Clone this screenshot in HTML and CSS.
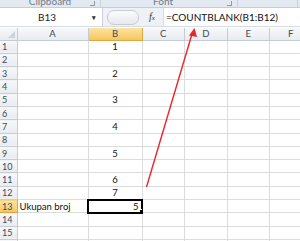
FILE: index.html
```html
<!DOCTYPE html>
<html lang="en">
<head>
    <meta charset="UTF-8">
    <title>COUNTBLANK</title>
    <link rel="stylesheet" href="styles.css">
</head>
<body>

    <div class="ribbon">
        <div class="group g-clip"><span>Clipboard</span><i class="launcher"></i></div>
        <div class="group g-font"><span>Font</span><i class="launcher"></i></div>
        <div class="group g-align"></div>
        <div class="group g-rest"></div>
    </div>

    <div class="fbar">
        <div class="namebox"><span>B13</span><b class="drop">&#9662;</b></div>
        <div class="grip"><span class="pill"></span></div>
        <div class="fx">f<sub>x</sub></div>
        <div class="formula">=COUNTBLANK(B1:B12)</div>
    </div>

    <div class="sheet">
        <table>
            <colgroup>
                <col class="c-row">
                <col class="c-a">
                <col class="c-b">
                <col class="c-std">
                <col class="c-std">
                <col class="c-std">
                <col class="c-std">
            </colgroup>
            <thead>
                <tr>
                    <th class="corner"></th>
                    <th>A</th>
                    <th class="sel">B</th>
                    <th>C</th>
                    <th>D</th>
                    <th>E</th>
                    <th>F</th>
                </tr>
            </thead>
            <tbody id="rows"></tbody>
        </table>

        <svg class="arrow" width="300" height="241" viewBox="0 0 300 241">
            <line x1="146.5" y1="187" x2="192" y2="34" stroke="#e8262b" stroke-width="1.4"/>
            <polygon points="194.5,28 189,35.5 197,37" fill="#e8262b"/>
        </svg>
    </div>

    <script>
        const cells = {
            1: ["", "1"], 3: ["", "2"], 5: ["", "3"], 7: ["", "4"],
            9: ["", "5"], 11: ["", "6"], 12: ["", "7"], 13: ["Ukupan broj", "5"]
        };

        // row 16 only peeks in at the bottom edge, so no label for it
        const body = document.getElementById("rows");
        for (let r = 1; r <= 16; r++) {
            const [a, b] = cells[r] || ["", ""];
            const row = document.createElement("tr");
            const active = r === 13;
            row.innerHTML = `
                <th class="${active ? "sel" : ""}">${r < 16 ? r : ""}</th>
                <td class="txt">${a}</td>
                <td class="${active ? "active" : "num"}">${b}</td>
                <td></td><td></td><td></td><td></td>
            `;
            body.appendChild(row);
        }
    </script>
</body>
</html>
```

FILE: styles.css
```css
body {
    margin: 0;
    width: 300px;
    height: 241px;
    overflow: hidden;
    background: #fff;
    font-family: Lato, "Open Sans", sans-serif;
    position: relative;
}

.ribbon {
    display: flex;
    height: 7px;
    background: #e3e9f0;
    border-bottom: 1px solid #c5cdd8;
    overflow: hidden;
}

.group {
    position: relative;
    border-right: 1px solid #c9d1dc;
    display: flex;
    justify-content: center;
}

.group span {
    font-size: 10px;
    line-height: 10px;
    margin-top: -4px;
    color: #6f7d8e;
}

.g-clip { width: 100px; }
.g-font { width: 137px; padding-right: 12px; box-sizing: border-box; }
.g-align { width: 59px; }
.g-rest { flex: 1; border-right: none; }

.launcher {
    position: absolute;
    right: 5px;
    top: 1px;
    width: 4px;
    height: 4px;
    border-right: 1px solid #8e9aa8;
    border-bottom: 1px solid #8e9aa8;
}

.fbar {
    display: flex;
    height: 18px;
    background: #eef1f5;
    border-bottom: 1px solid #d6dce4;
}

.namebox {
    width: 102px;
    background: #fff;
    border-right: 1px solid #c9d0da;
    display: flex;
    align-items: center;
    font-size: 10px;
    color: #222;
}

.namebox span {
    flex: 1;
    text-align: center;
    padding-left: 2px;
}

.drop {
    font-size: 7px;
    color: #333;
    width: 10px;
}

.grip {
    width: 42px;
    display: flex;
    align-items: center;
    padding-left: 4px;
}

.pill {
    width: 30px;
    height: 13px;
    border-radius: 7px;
    border: 1px solid #c6ccd4;
    background: linear-gradient(#fafbfc, #e6e9ee);
}

.fx {
    width: 14px;
    font-family: "Liberation Serif", serif;
    font-style: italic;
    font-size: 10px;
    line-height: 18px;
    color: #333;
}

.fx sub {
    font-size: 7px;
    vertical-align: 0;
}

.formula {
    flex: 1;
    background: #fff;
    border-left: 1px solid #d6dce4;
    font-size: 10px;
    line-height: 18px;
    padding-left: 2px;
    color: #111;
    white-space: nowrap;
}

.sheet {
    margin-top: 1px;
}

table {
    border-collapse: collapse;
    table-layout: fixed;
    width: 312px;
}

.c-row { width: 17px; }
.c-a { width: 71px; }
.c-b { width: 54px; }
.c-std { width: 42.5px; }

th, td {
    height: 12.3px;
    padding: 0;
    font-size: 9.5px;
    line-height: 11px;
    white-space: nowrap;
    overflow: hidden;
}

td {
    border-right: 1px solid #dadcdd;
    border-bottom: 1px solid #dadcdd;
    color: #111;
}

th {
    background: linear-gradient(#f7f8fa, #e8ebef);
    border-right: 1px solid #c6ccd4;
    border-bottom: 1px solid #c6ccd4;
    color: #3a4a5c;
    font-weight: normal;
}

thead th {
    height: 11.5px;
}

tbody th {
    text-align: left;
    padding-left: 2px;
    font-size: 9px;
}

th.sel {
    background: linear-gradient(#fbe3a3, #f6c65e);
    border-color: #e0a844;
}

.corner {
    position: relative;
}

.corner::after {
    content: "";
    position: absolute;
    right: 2px;
    bottom: 2px;
    border-left: 7px solid transparent;
    border-bottom: 7px solid #cdd3da;
}

.txt {
    padding-left: 2px;
}

.num {
    text-align: center;
}

.active {
    text-align: right;
    padding-right: 3px;
    outline: 2px solid #000;
    outline-offset: -1px;
    position: relative;
}

.active::after {
    content: "";
    position: absolute;
    right: -2px;
    bottom: -2px;
    width: 3px;
    height: 3px;
    background: #000;
    border: 1px solid #fff;
}

.arrow {
    position: absolute;
    left: 0;
    top: 0;
    pointer-events: none;
}
```
